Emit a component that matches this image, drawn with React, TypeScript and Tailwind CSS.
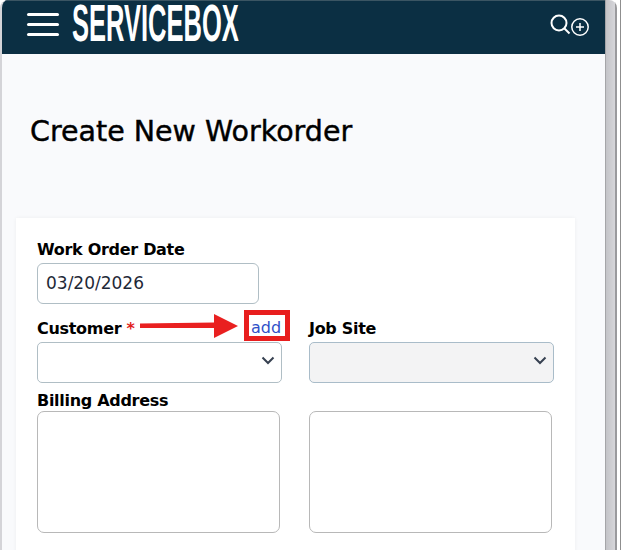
const font = "font-['DejaVu_Sans','Liberation_Sans',sans-serif]";

function Chevron() {
  return (
    <svg width="14" height="9" viewBox="0 0 14 9" fill="none" className="absolute right-[6px] top-[13px]">
      <path d="M1.5 1.5 7 7l5.5-5.5" stroke="#374151" strokeWidth="2" />
    </svg>
  );
}

const labelCls = "text-[16px] font-bold text-black tracking-[-0.3px]";

export default function App() {
  return (
    <div className={`${font} w-[622px] h-[550px] bg-white overflow-hidden flex`}>
      <div className="w-[605px] h-[550px] shrink-0 bg-[#f9fafc] border-l-2 border-[#d4d4d8] rounded-tl-[8px] overflow-hidden flex flex-col">
        <header className="h-[54px] shrink-0 bg-[#0b2f43] border-t border-[#3b5563] flex items-start relative">
          <div className="ml-[25px] mt-[12px] w-[32px] flex flex-col gap-[7px]">
            <span className="h-[3px] bg-white rounded-sm" />
            <span className="h-[3px] bg-white rounded-sm" />
            <span className="h-[3px] bg-white rounded-sm" />
          </div>
          <div className="ml-[13px] mt-[-2px] h-[50px] w-[350px]">
            <span className="block origin-left scale-x-[.5] text-white font-['Liberation_Sans'] font-bold text-[51px] leading-[50px] whitespace-nowrap">SERVICEBOX</span>
          </div>
          <div className="absolute right-[15px] top-[13px]">
            <svg width="40" height="22" viewBox="0 0 40 22" fill="none" stroke="white">
              <circle cx="9" cy="9" r="7.5" strokeWidth="2" />
              <path d="M14.5 14.5 19.5 19.5" strokeWidth="2" />
              <circle cx="30" cy="13" r="8.2" strokeWidth="1.5" />
              <path d="M30 9v8M26 13h8" strokeWidth="1.5" />
            </svg>
          </div>
        </header>
        <main className="flex-1 pl-[14px] pr-[30px]">
          <h1 className="mt-[61px] ml-[14px] text-[28.5px] leading-[34px] [-webkit-text-stroke:0.45px_#000] text-black whitespace-nowrap">Create New Workorder</h1>
          <section className="mt-[69px] bg-white h-[340px] shadow-[0_0_4px_rgba(0,0,0,0.05)] pl-[21px] pt-[23px]">
            <label className={`block leading-[18px] ${labelCls}`}>Work Order Date</label>
            <div className="mt-[4px] w-[222px] h-[41px] border border-[#b0bec5] rounded-[6px] pl-[8px] text-[17px] leading-[38px] text-[#1f2937]">03/20/2026</div>
            <div className="mt-[14px] flex gap-[27px]">
              <div className="w-[245px]">
                <div className="relative h-[21px] flex items-center">
                  <label className={labelCls}>Customer <span className="text-[#e11d1d]">*</span></label>
                  <svg width="100" height="24" viewBox="0 0 100 24" className="absolute left-[102px] top-[-4px]">
                    <path d="M1 9.5 L75 8.5 V 0 L 99 12 L 75 24 V 14 L 1 14 Z" fill="#e92020" />
                  </svg>
                  <div className="absolute right-[-8px] top-[-8px] border-[5px] border-[#e81e1e] w-[46px] h-[31px] flex items-center justify-center bg-white text-[16px] text-[#2f50c8] pt-[5px] pr-[2px]">add</div>
                </div>
                <div className="relative mt-[3px] h-[41px] border border-[#b0bec5] rounded-[5px] bg-white"><Chevron /></div>
              </div>
              <div className="w-[245px]">
                <label className={`block h-[21px] leading-[21px] ${labelCls}`}>Job Site</label>
                <div className="relative mt-[3px] h-[41px] border border-[#a9bcc9] rounded-[5px] bg-[#f3f3f4]"><Chevron /></div>
              </div>
            </div>
            <label className={`block mt-[9px] leading-[18px] ${labelCls}`}>Billing Address</label>
            <div className="mt-[1px] flex gap-[29px]">
              <div className="w-[243px] h-[122px] border border-[#b8b8b8] rounded-[7px]" />
              <div className="w-[243px] h-[122px] border border-[#b8b8b8] rounded-[7px]" />
            </div>
          </section>
        </main>
      </div>
      <div className="w-[17px] h-[550px] flex shrink-0">
        <div className="w-[12px] flex rounded-tr-[8px] overflow-hidden">
          <div className="w-[1px] bg-[#a5a5a8]" />
          <div className="w-[9px] bg-gradient-to-r from-[#c4c4c8] to-[#d6d6da]" />
          <div className="w-[2px] bg-[#9a9a9d]" />
        </div>
        <div className="w-[3px] bg-white" />
        <div className="w-[1px] bg-[#8f8f8f]" />
        <div className="w-[1px] bg-white" />
      </div>
    </div>
  );
}
